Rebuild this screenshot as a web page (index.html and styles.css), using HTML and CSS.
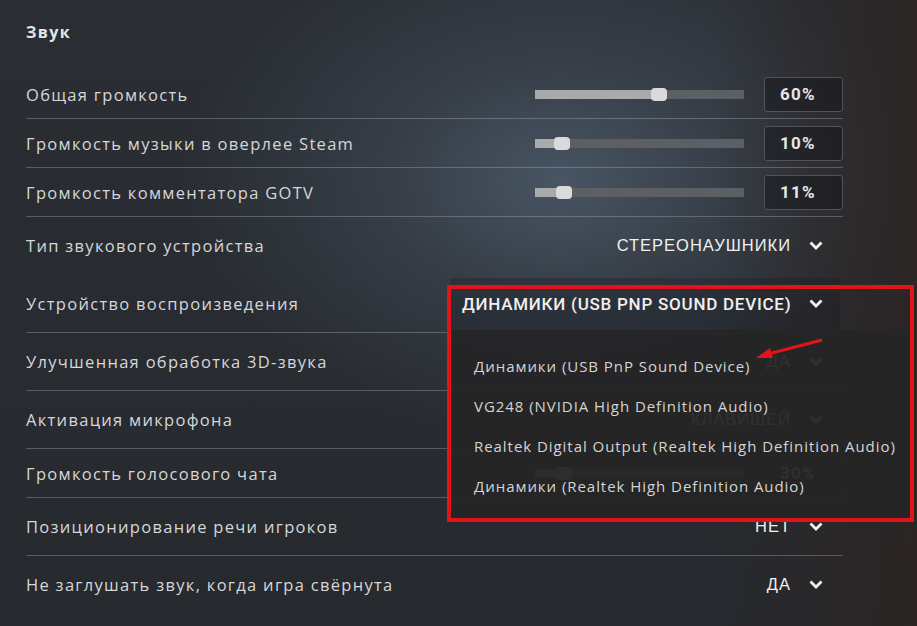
FILE: index.html
```html
<!DOCTYPE html>
<html lang="ru">
<head>
<meta charset="utf-8">
<title>Звук</title>
<link rel="stylesheet" href="styles.css">
</head>
<body>
<div class="page">
  <h2 class="title">Звук</h2>
  <div class="list">
    <div class="row row-slider">
      <span class="label">Общая громкость</span>
      <div class="ctl">
        <div class="slider"><div class="fill" style="width:124px"></div><div class="thumb" style="left:116px"></div></div>
        <div class="num">60%</div>
      </div>
    </div>
    <div class="row row-slider">
      <span class="label">Громкость музыки в оверлее Steam</span>
      <div class="ctl">
        <div class="slider"><div class="fill" style="width:27px"></div><div class="thumb" style="left:19px"></div></div>
        <div class="num">10%</div>
      </div>
    </div>
    <div class="row row-slider">
      <span class="label">Громкость комментатора GOTV</span>
      <div class="ctl">
        <div class="slider"><div class="fill" style="width:29px"></div><div class="thumb" style="left:21px"></div></div>
        <div class="num">11%</div>
      </div>
    </div>
    <div class="row row-select no-line">
      <span class="label">Тип звукового устройства</span>
      <div class="select"><span class="val">СТЕРЕОНАУШНИКИ</span><svg class="chev" viewBox="0 0 14 9"><polyline points="1.5,1.5 7,7 12.5,1.5"/></svg></div>
    </div>
    <div class="row row-select">
      <span class="label">Устройство воспроизведения</span>
      <div class="select open">
        <span class="val-open">ДИНАМИКИ (USB PNP SOUND DEVICE)</span><svg class="chev" viewBox="0 0 14 9"><polyline points="1.5,1.5 7,7 12.5,1.5"/></svg>
        <ul class="menu">
          <li>Динамики (USB PnP Sound Device)</li>
          <li>VG248 (NVIDIA High Definition Audio)</li>
          <li>Realtek Digital Output (Realtek High Definition Audio)</li>
          <li>Динамики (Realtek High Definition Audio)</li>
        </ul>
      </div>
    </div>
    <div class="row row-select">
      <span class="label">Улучшенная обработка 3D-звука</span>
      <div class="select"><span class="val">ДА</span><svg class="chev" viewBox="0 0 14 9"><polyline points="1.5,1.5 7,7 12.5,1.5"/></svg></div>
    </div>
    <div class="row row-select">
      <span class="label">Активация микрофона</span>
      <div class="select"><span class="val">КЛАВИШЕЙ</span><svg class="chev" viewBox="0 0 14 9"><polyline points="1.5,1.5 7,7 12.5,1.5"/></svg></div>
    </div>
    <div class="row row-slider">
      <span class="label">Громкость голосового чата</span>
      <div class="ctl">
        <div class="slider"><div class="fill" style="width:29px"></div><div class="thumb" style="left:21px"></div></div>
        <div class="num">30%</div>
      </div>
    </div>
    <div class="row row-select">
      <span class="label">Позиционирование речи игроков</span>
      <div class="select"><span class="val">НЕТ</span><svg class="chev" viewBox="0 0 14 9"><polyline points="1.5,1.5 7,7 12.5,1.5"/></svg></div>
    </div>
    <div class="row row-select no-line">
      <span class="label">Не заглушать звук, когда игра свёрнута</span>
      <div class="select"><span class="val">ДА</span><svg class="chev" viewBox="0 0 14 9"><polyline points="1.5,1.5 7,7 12.5,1.5"/></svg></div>
    </div>
  </div>
</div>
<div class="red-frame"></div>
<svg class="red-arrow" width="917" height="626" viewBox="0 0 917 626">
  <line x1="822" y1="340" x2="768" y2="354"/>
  <polygon points="756,358 770,348 773,358"/>
</svg>
</body>
</html>
```
FILE: styles.css
```css
html, body {
  margin: 0;
  padding: 0;
}
body {
  width: 917px;
  height: 626px;
  overflow: hidden;
  position: relative;
  font-family: "Open Sans", "Noto Sans", sans-serif;
  color: #d9dadb;
  background-color: #2a2e34;
  background-image:
    linear-gradient(90deg, rgba(42,34,32,0) 0%, rgba(42,34,32,0) 78%, rgba(44,36,34,0.85) 100%),
    radial-gradient(ellipse 380px 260px at 560px 180px, rgba(78,92,108,0.85) 0%, rgba(70,82,96,0.45) 45%, rgba(60,70,82,0) 100%),
    linear-gradient(180deg, rgba(40,44,50,0) 0%, rgba(36,38,42,0.6) 100%);
}
.page {
  padding-left: 26px;
  width: 817px;
}
.title {
  margin: 0;
  height: 70px;
  box-sizing: border-box;
  padding-top: 20px;
  font-size: 16px;
  line-height: 24px;
  font-weight: 700;
  letter-spacing: 1.4px;
  color: #e4e5e6;
}
.row {
  display: flex;
  align-items: center;
  justify-content: space-between;
  border-bottom: 1px solid rgba(190,196,204,0.32);
  box-sizing: border-box;
}
.row.no-line {
  border-bottom-color: transparent;
}
.row-slider {
  height: 49px;
}
.row-select {
  height: 58px;
}
.label {
  font-size: 16.5px;
  letter-spacing: 1.3px;
  color: #d6d7d8;
  white-space: nowrap;
}
.ctl {
  display: flex;
  align-items: center;
  gap: 20px;
}
.slider {
  position: relative;
  width: 209px;
  height: 9px;
  background: #5c6065;
}
.fill {
  height: 100%;
  background: #a8aaac;
}
.thumb {
  position: absolute;
  top: -2px;
  width: 16px;
  height: 13px;
  border-radius: 4px;
  background: #dadada;
}
.num {
  width: 79px;
  height: 35px;
  box-sizing: border-box;
  border: 1.5px solid #50545a;
  border-radius: 3px;
  background: rgba(18,20,24,0.45);
  padding-left: 15px;
  display: flex;
  align-items: center;
  font-family: "Roboto", sans-serif;
  font-weight: 700;
  font-size: 17px;
  letter-spacing: 1.2px;
  color: #e6e6e6;
}
.select {
  display: flex;
  align-items: center;
  gap: 18px;
  margin-right: 20px;
}
.val {
  font-family: "Liberation Sans", Arial, sans-serif;
  font-size: 16.5px;
  letter-spacing: 1px;
  color: #f0f0f0;
  white-space: nowrap;
}
.chev {
  flex-shrink: 0;
  width: 14px;
  height: 9px;
  fill: none;
  stroke: #f4f4f4;
  stroke-width: 2.8;
  stroke-linecap: butt;
  stroke-linejoin: miter;
}
.select.open {
  position: relative;
  width: 390px;
  height: 52px;
  box-sizing: border-box;
  margin-right: 3px;
  padding: 0 17px 0 12px;
  justify-content: space-between;
  background: rgba(22,26,32,0.28);
}
.val-open {
  font-family: "Roboto", sans-serif;
  font-weight: 500;
  font-size: 17px;
  letter-spacing: 0.75px;
  color: #f0f0f0;
  white-space: nowrap;
}
.menu {
  position: absolute;
  top: 52px;
  left: 0;
  width: 460px;
  margin: 0;
  padding: 16px 0 12px 24px;
  box-sizing: border-box;
  list-style: none;
  background: rgba(37,37,38,0.95);
  z-index: 2;
}
.menu li {
  height: 40px;
  line-height: 40px;
  font-size: 15px;
  letter-spacing: 0.95px;
  color: #d4d4d4;
  white-space: nowrap;
}
.red-frame {
  position: absolute;
  left: 447px;
  top: 285px;
  width: 467px;
  height: 237px;
  box-sizing: border-box;
  border: 4px solid #e3131a;
  z-index: 3;
}
.red-arrow {
  position: absolute;
  left: 0;
  top: 0;
  z-index: 4;
}
.red-arrow line {
  stroke: #e3131a;
  stroke-width: 3;
}
.red-arrow polygon {
  fill: #e3131a;
}
```
